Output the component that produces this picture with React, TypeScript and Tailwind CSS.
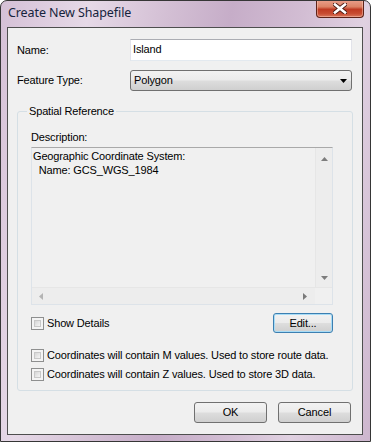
import React from "react";

const btnBg =
  "bg-[linear-gradient(to_bottom,#f2f2f2_0%,#ebebeb_48%,#dddddd_52%,#cfcfcf_100%)]";

function CheckBox() {
  return (
    <div className="w-[13px] h-[13px] shrink-0 border border-[#8e8f8f] bg-[#f4f4f4] p-[2px]">
      <div className="w-full h-full border border-[#c8c8c8] bg-[linear-gradient(135deg,#d6d6d6_0%,#f4f4f4_100%)]" />
    </div>
  );
}

function Tri({ dir, color }: { dir: "up" | "down" | "left" | "right"; color: string }) {
  const pts: Record<string, string> = {
    up: "0,4 7,4 3.5,0",
    down: "0,0 7,0 3.5,4",
    left: "4,0 4,7 0,3.5",
    right: "0,0 0,7 4,3.5",
  };
  const vert = dir === "up" || dir === "down";
  return (
    <svg width={vert ? 7 : 4} height={vert ? 4 : 7} viewBox={vert ? "0 0 7 4" : "0 0 4 7"}>
      <polygon points={pts[dir]} fill={color} />
    </svg>
  );
}

export default function App() {
  return (
    <div
      className="w-[371px] h-[442px] flex flex-col border border-[#363636] rounded-t-[7px] overflow-hidden bg-[linear-gradient(100deg,#d5c0d6_0%,#e6d9e7_20%,#d3bfd4_38%,#c6adc8_52%,#d2bdd3_68%,#e0d1e1_82%,#cdb6ce_100%)]"
      style={{ fontFamily: '"Liberation Sans", Arial, sans-serif' }}
    >
      {/* Title bar */}
      <div className="h-[26px] shrink-0 flex items-start justify-between">
        <div
          className="pl-[7px] pt-[4px] text-[12.5px] leading-[16px] text-[#16243d] tracking-[-0.1px]"
          style={{ fontFamily: '"Noto Sans", "Open Sans", sans-serif' }}
        >
          Create New Shapefile
        </div>
        <div className="-mt-[1px] mr-[6px] w-[48px] h-[18px] rounded-b-[4px] border border-[#5e2218] border-t-0 bg-[linear-gradient(to_bottom,#eaa08c_0%,#dc8266_40%,#bf3a22_55%,#c84c32_80%,#d9775e_100%)] flex items-center justify-center shadow-[inset_0_0_0_1px_rgba(255,210,195,0.45)]">
          <svg width="14" height="11" viewBox="0 0 14 11">
            <path d="M2 1.5 L12 9.5 M12 1.5 L2 9.5" stroke="#4a1a12" strokeWidth="4.4" strokeLinecap="square" />
            <path d="M2 1.5 L12 9.5 M12 1.5 L2 9.5" stroke="#ffffff" strokeWidth="2.6" strokeLinecap="square" />
          </svg>
        </div>
      </div>

      {/* Body */}
      <div className="ml-[6px] w-[356px] h-[408px] shrink-0 border border-[#4e4e4e] bg-[#f0f0f0] text-[11px] tracking-[-0.15px] text-black flex flex-col">
        {/* Name row */}
        <div className="mt-[11px] h-[22px] flex items-center">
          <div className="ml-[9px] w-[113px]">Name:</div>
          <div className="w-[222px] h-[22px] bg-white border border-[#e2e3ea] border-t-[#abadb3] border-b-[#e3e9ef] flex items-center pl-[2px] pb-[2px]">
            Island
          </div>
        </div>

        {/* Feature type row */}
        <div className="mt-[9px] h-[21px] flex items-center">
          <div className="ml-[9px] w-[113px]">Feature Type:</div>
          <div className={`w-[222px] h-[21px] border border-[#707070] rounded-[3px] ${btnBg} flex items-center justify-between pl-[3px] pr-[4px]`}>
            <span>Polygon</span>
            <Tri dir="down" color="#000000" />
          </div>
        </div>

        {/* Group box */}
        <div className="relative mt-[20px] ml-[9px] w-[336px] border border-[#d5dfe5] rounded-[3px] pb-[6px] pt-[7px]">
          <div className="absolute left-[9px] -top-[8px] px-[2px] leading-[14px] bg-[#f0f0f0]">Spatial Reference</div>
          <div className="pl-[13px] flex flex-col w-[316px]">
            <div className="mt-[11px] leading-[14px]">Description:</div>
            <div className="mt-[3px] w-[302px] h-[158px] border border-[#dde3e9] border-t-[#a9a9a9] flex flex-col">
              <div className="flex-1 flex min-h-0">
                <div className="flex-1 pl-[1px] pt-[1px] leading-[14px] whitespace-pre">
                  {"Geographic Coordinate System:\n  Name: GCS_WGS_1984"}
                </div>
                <div className="w-[17px] bg-[#ededed] border-l border-[#e6e6e6] flex flex-col items-center justify-between pt-[9px] pb-[7px]">
                  <Tri dir="up" color="#7d7d7d" />
                  <Tri dir="down" color="#7d7d7d" />
                </div>
              </div>
              <div className="h-[17px] flex border-t border-[#e6e6e6]">
                <div className="flex-1 bg-[#ededed] flex items-center justify-between pl-[7px] pr-[8px]">
                  <Tri dir="left" color="#b4b4b4" />
                  <Tri dir="right" color="#7a7a7a" />
                </div>
                <div className="w-[17px] bg-[#f0f0f0]" />
              </div>
            </div>

            <div className="mt-[8px] h-[20px] w-[302px] flex items-center justify-between">
              <div className="flex items-center gap-[3px]">
                <CheckBox />
                <span>Show Details</span>
              </div>
              <div className={`w-[60px] h-[20px] border border-[#3c7fb1] rounded-[3px] ${btnBg} shadow-[inset_0_0_0_1px_#a8dcf6] flex items-center justify-center`}>
                Edit...
              </div>
            </div>

            <div className="mt-[13px] h-[19px] flex items-center gap-[3px]">
              <CheckBox />
              <span>Coordinates will contain M values. Used to store route data.</span>
            </div>
            <div className="h-[19px] flex items-center gap-[3px]">
              <CheckBox />
              <span>Coordinates will contain Z values. Used to store 3D data.</span>
            </div>
          </div>
        </div>

        {/* Buttons */}
        <div className="mt-[11px] h-[21px] flex justify-end gap-[11px] mr-[11px]">
          <div className={`w-[73px] h-[21px] border border-[#707070] rounded-[3px] ${btnBg} flex items-center justify-center`}>
            OK
          </div>
          <div className={`w-[73px] h-[21px] border border-[#707070] rounded-[3px] ${btnBg} flex items-center justify-center`}>
            Cancel
          </div>
        </div>
      </div>
    </div>
  );
}
